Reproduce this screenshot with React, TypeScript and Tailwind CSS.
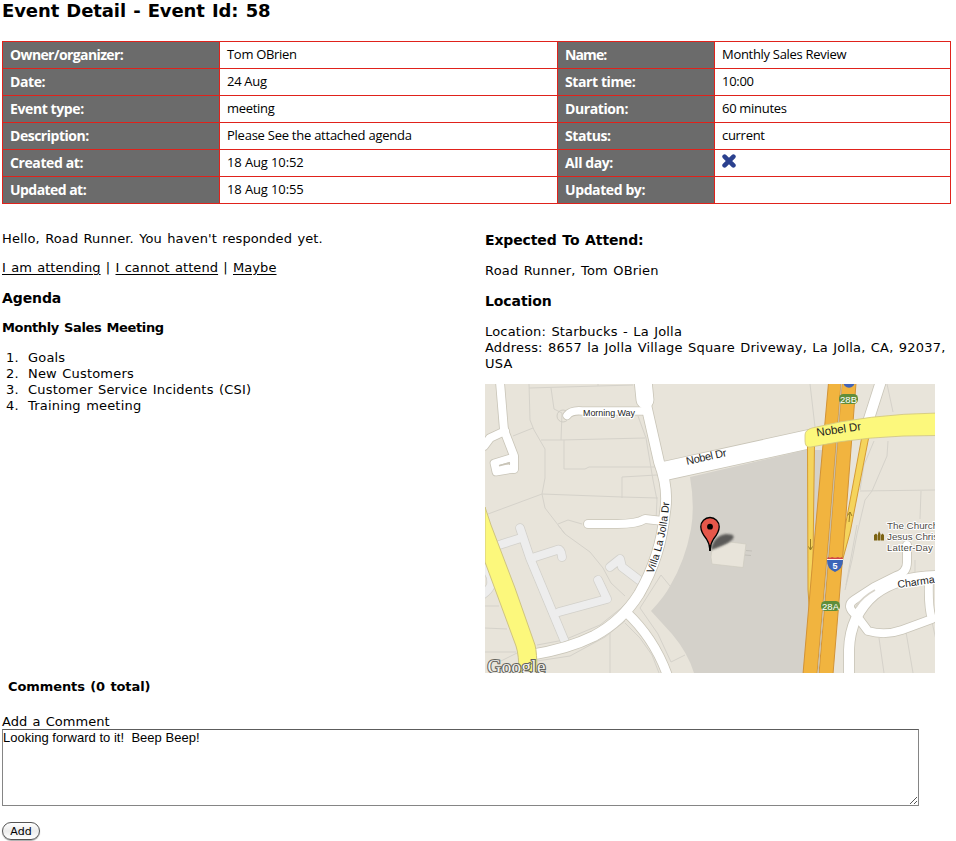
import type { ReactNode } from "react";

const LABEL = "flex h-[27px] items-center border-b border-r border-[#e0221b] bg-[#6b6b6b] pl-[7px] pb-px text-[14px] font-bold text-white tracking-[-0.4px] [word-spacing:0px] font-['Open_Sans','Noto_Sans',sans-serif] whitespace-nowrap";
const VALUE = "flex h-[27px] items-center border-b border-r border-[#e0221b] pl-[7px] pb-[2px] text-[13px] tracking-[-0.3px] [word-spacing:0px] font-['Open_Sans','Noto_Sans',sans-serif] whitespace-nowrap";

function T({ className, children }: { className: string; children: ReactNode }) {
  return <span className={className}>{children}</span>;
}

function Cross() {
  return (
    <svg className="mb-[3px] h-[14px] w-[14px]" viewBox="0 0 14 14">
      <path d="M2.6 2.6L11.4 11.4M11.4 2.6L2.6 11.4" stroke="#2b418f" strokeWidth="4.6" strokeLinecap="round" />
    </svg>
  );
}

function DetailTable() {
  return (
    <div className="ml-[2px] grid w-[949px] grid-cols-[217px_338px_157px_236px] border-l border-t border-[#e0221b]">
      <div className={LABEL}><T className="tracking-[-0.62px]">Owner/organizer:</T></div>
      <div className={VALUE}>Tom OBrien</div>
      <div className={LABEL}><T className="tracking-[-0.9px]">Name:</T></div>
      <div className={VALUE}>Monthly Sales Review</div>

      <div className={LABEL}>Date:</div>
      <div className={VALUE}>24 Aug</div>
      <div className={LABEL}>Start time:</div>
      <div className={VALUE}>10:00</div>

      <div className={LABEL}>Event type:</div>
      <div className={VALUE}>meeting</div>
      <div className={LABEL}>Duration:</div>
      <div className={VALUE}>60 minutes</div>

      <div className={LABEL}><T className="tracking-[-0.48px]">Description:</T></div>
      <div className={VALUE}><T className="tracking-[-0.25px]">Please See the attached agenda</T></div>
      <div className={LABEL}>Status:</div>
      <div className={VALUE}>current</div>

      <div className={LABEL}>Created at:</div>
      <div className={VALUE}><T className="tracking-[-0.12px]">18 Aug 10:52</T></div>
      <div className={LABEL}>All day:</div>
      <div className={VALUE}><Cross /></div>

      <div className={LABEL}><T className="tracking-[-0.55px]">Updated at:</T></div>
      <div className={VALUE}><T className="tracking-[-0.12px]">18 Aug 10:55</T></div>
      <div className={LABEL}>Updated by:</div>
      <div className={VALUE} />
    </div>
  );
}

const AGENDA = ["Goals", "New Customers", "Customer Service Incidents (CSI)", "Training meeting"];

const PARCELS = [
  "M529 384L530 420L534 430L545 449V478L542 494L545 508L565 534",
  "M529 388L633 385M598 384V386",
  "M551 388L554 409L562 413L561 440",
  "M513 436L533 428M541 440H561L645 438",
  "M564 440V469H585L589 467H655",
  "M622 498V477L657 475M542 494L622 497L658 498",
  "M488 514L542 494M558 524L568 520L582 524",
  "M558 525L565 534L590 552L603 568L611 583L625 596",
  "M485 606H499M485 628L507 629M485 652H516M501 661L517 653",
  "M537 645L564 640L600 625L620 609L641 588L652 560L662 530",
  "M537 661L570 656L605 637L625 621M610 631V673",
  "M625 623L640 638L652 655L659 673",
  "M670 586L661 575L640 608L658 634L671 662L685 655",
  "M638 416L646 438L653 480L657 500L656 520",
  "M810 384L815 427M888 441L887 456L872 491L865 500L857 534L852 560L845 590",
  "M874 441L864 465L860 490M860 491L935 490M921 491L920 519M857 525L846 585",
  "M879 638L884 673M906 632L913 673M932 622L936 640M887 384L893 412M915 560V572",
];

const GREY_STREETS = [
  "M520 528L530 558L565 642",
  "M499 545L521 538",
  "M532 558L557 550Q561 548 562 557",
  "M559 612L607 599L598 580",
  "M610 567L620 559L622 567L639 580",
  "M480 566Q493 571 491 585Q488 592 480 596",
];

const STREETS = [
  { d: "M500 382L504 430L514 456V469", w: 8 },
  { d: "M505 431L490 438L484 446", w: 8 },
  { d: "M514 457L494 463L496 472L514 469", w: 7 },
  { d: "M567 415.500Q571 410 582 411H645", w: 7.500 },
  { d: "M588 524H617Q637 524 645 519L663 521", w: 8 },
  { d: "M626 612Q656 640 669 680", w: 9 },
  { d: "M882 378L867 425", w: 10 },
  { d: "M907 545V562Q907 573 896 576L874 587L854 600Q845 606 856 615L868 631Q885 636 902 630L932 619Q928 608 929 580", w: 8 },
  { d: "M938 576Q899 576 875 594Q850 615 849 650V678", w: 10 },
  { d: "M643 380L645 400", w: 17 },
  { d: "M645 400L659 462Q669 489 665 512Q661 556 639 594Q622 621 594 636Q568 649 530 655", w: 10 },
];

function LocationMap() {
  return (
    <svg className="mt-[12px] block h-[289px] w-[450px] tracking-normal [word-spacing:0px]" viewBox="485 384 450 289" fontFamily="'Liberation Sans', Arial, sans-serif">
      <rect x="485" y="384" width="450" height="289" fill="#e8e4da" />
      <path d="M690 477L806 450H830L812 673H694Q688 653 672 634L651 611Q665 596 670 586Q685 561 691 529Q695 505 690 477Z" fill="#d4d1ca" />
      <g fill="none" stroke="#d5d2ca" strokeWidth="1">
        {PARCELS.map((d) => <path key={d} d={d} />)}
      </g>
      <circle cx="563" cy="416" r="6" fill="none" stroke="#d0cdc4" strokeWidth="1" />
      <path d="M712 564L743 567.500L746 544L730 542L712 549L711 557Z" fill="#e8e4da" stroke="#cfcbc0" strokeWidth="0.700" />
      <path d="M746 550.500L752 551M745 555L751 555.500M753 462V457L763 455V459" stroke="#bdbab2" strokeWidth="0.800" fill="none" />

      <g fill="none" strokeLinecap="round" strokeLinejoin="round">
        {GREY_STREETS.map((d) => <path key={d} d={d} stroke="#d2d0ca" strokeWidth="9.500" />)}
        {GREY_STREETS.map((d) => <path key={d} d={d} stroke="#ededed" strokeWidth="8" />)}
        {STREETS.map((s) => <path key={s.d} d={s.d} stroke="#c9c5b8" strokeWidth={s.w + 1.6} />)}
        <path d="M667 470.500L812 438.500" stroke="#c9c5b8" strokeWidth="20" strokeLinecap="butt" />
        {STREETS.map((s) => <path key={s.d} d={s.d} stroke="#fff" strokeWidth={s.w} />)}
        <path d="M662 471.500L812 438.500" stroke="#fff" strokeWidth="18.400" strokeLinecap="butt" />
        <path d="M496 467.500H512" stroke="#fff" strokeWidth="5" />
      </g>
      <path d="M499 465.800L510 462.800" stroke="#c9c5b8" strokeWidth="1.600" />
      <path d="M875 590Q862 597 856 607" stroke="#d8d4ca" strokeWidth="1.800" fill="none" />

      <path d="M485 507L491 525L515 588L535 645Q537 652 537 673H519Q519 655 516 646L485 562Z" fill="#fcf87c" stroke="#cfc480" strokeWidth="1" />

      <path d="M825 440L803 673H812L845 450Z" fill="#cbc8c1" />
      <path d="M807.500 444H814.500L813 560L810 618L808 590Z" fill="#f5d45c" stroke="#d49b35" strokeWidth="1" />
      <path d="M862 436H869L850 533L842 562L838 590L844 533Z" fill="#f5d45c" stroke="#d49b35" strokeWidth="1" />
      <path d="M828.500 383H841L829 534L817 674H803L815 534Z" fill="#f1b43f" stroke="#d29336" strokeWidth="1" />
      <path d="M842 383H856L844.500 534L833 674H819L830.500 534Z" fill="#f1b43f" stroke="#d29336" strokeWidth="1" />
      <path d="M841.500 384L829.800 534L818 673" stroke="#c8bea8" strokeWidth="1.100" fill="none" />

      <path d="M812 428Q868 414 938 413V435.500Q866 435 811 447Q805 448 805 441V435Q805 430 812 428Z" fill="#fcf87c" stroke="#cfc480" strokeWidth="0.800" />

      <g stroke="#9a7d25" strokeWidth="1" fill="none">
        <path d="M810.500 539V550M808.500 546.500L810.500 550L812.500 546.500" />
        <path d="M849 522L850 512M847.500 515.500L850 512L852 516" />
      </g>

      <circle cx="849" cy="382" r="5.800" fill="#4264b8" />
      <rect x="839" y="394" width="19" height="10" rx="4.500" fill="#5f8d3a" />
      <text x="848.500" y="402.500" fontSize="9.500" fill="#fff" textAnchor="middle" textLength="17">28B</text>
      <rect x="821" y="601" width="19" height="10" rx="4.500" fill="#5f8d3a" />
      <text x="830.500" y="609.500" fontSize="9.500" fill="#fff" textAnchor="middle" textLength="17">28A</text>
      <path d="M827 560H843Q843 569 835 572Q827 569 827 560Z" fill="#3c65b8" />
      <path d="M828 557Q830 558.500 832 557Q835 558.500 838 557Q840 558.500 842 557L843 559H827Z" fill="#d0454a" />
      <path d="M827 559.500H843" stroke="#fff" strokeWidth="0.900" />
      <text x="835" y="568.500" fontSize="9" fontWeight="bold" fill="#fff" textAnchor="middle">5</text>

      <g fill="#1c1c1c" stroke="#fff" strokeWidth="2.500" paintOrder="stroke" strokeLinejoin="round">
        <text x="583" y="415.500" fontSize="9.500" textLength="52" lengthAdjust="spacingAndGlyphs">Morning Way</text>
        <text transform="translate(687 465) rotate(-12.500)" fontSize="11" textLength="41" stroke="none">Nobel Dr</text>
        <text transform="translate(817 436.500) rotate(-8.500)" fontSize="11.500" textLength="45" stroke="none">Nobel Dr</text>
        <path id="villa-label" d="M653 574Q667 540 669.500 498" fill="none" stroke="none" />
        <text fontSize="10.500" stroke="none"><textPath href="#villa-label" textLength="74">Villa La Jolla Dr</textPath></text>
        <text transform="translate(898 588) rotate(-8)" fontSize="10.500">Charma</text>
        <g fill="#4f4d47" fontSize="9.800" strokeWidth="2">
          <text x="887" y="528.500">The Church</text>
          <text x="887" y="540">Jesus Chris</text>
          <text x="887" y="551" textLength="46">Latter-Day</text>
        </g>
      </g>
      <path d="M874 540.500V535L876 533.500L877.500 535V540.500ZM878 540.500V534L879 531L880.500 534V540.500ZM881 540.500V535L882.500 533.500L884 535V540.500Z" fill="#7c6312" />

      <defs>
        <filter id="pin-shadow" x="-50%" y="-50%" width="200%" height="200%"><feGaussianBlur stdDeviation="1.300" /></filter>
      </defs>
      <path d="M711 550Q713 536 726 534Q737 534 732 540Q726 545 711 550Z" fill="#333" opacity="0.750" filter="url(#pin-shadow)" />
      <path d="M710 550.500Q709.800 544 706.500 539Q700.800 532 700.800 526.700A9.200 9.200 0 0 1 719.200 526.700Q719.200 532 713.500 539Q710.200 544 710 550.500Z" fill="#e6574a" stroke="#000" strokeWidth="1.300" />
      <path d="M710 551V545" stroke="#000" strokeWidth="1.800" />
      <circle cx="710" cy="526.700" r="2.900" />

      <text x="487.500" y="673" fontFamily="'Liberation Serif', serif" fontSize="19" textLength="58" fill="#f3f3f0" stroke="#66645e" strokeWidth="2.200" paintOrder="stroke">Google</text>
    </svg>
  );
}

export default function App() {
  return (
    <div className="h-[841px] w-[956px] overflow-hidden bg-white text-[13px] leading-4 tracking-[0.19px] text-black [word-spacing:1px] font-['DejaVu_Sans',Verdana,sans-serif]">
      <h1 className="h-[41px] pl-[2px] text-[18px] font-bold leading-[22px] tracking-[-0.1px]">Event Detail - Event Id: 58</h1>
      <DetailTable />

      <div className="grid h-[469px] grid-cols-[483px_1fr] pl-[2px] pt-[27px]">
        <section>
          <p className="tracking-[0.13px]">Hello, Road Runner. You haven't responded yet.</p>
          <p className="mt-[13px] tracking-[0.08px]">
            <a className="underline underline-offset-2">I am attending</a> | <a className="underline underline-offset-2">I cannot attend</a> | <a className="underline underline-offset-2">Maybe</a>
          </p>
          <h2 className="mt-[14px] text-[14px] font-bold tracking-[-0.1px]">Agenda</h2>
          <h3 className="mt-[14px] text-[13px] font-bold tracking-[-0.37px]">Monthly Sales Meeting</h3>
          <ol className="mt-[14px]">
            {AGENDA.map((item, i) => (
              <li key={item} className="flex"><span className="w-[26px] pl-[4px]">{i + 1}.</span>{item}</li>
            ))}
          </ol>
        </section>
        <section>
          <h2 className="mt-[1px] text-[14px] font-bold tracking-[-0.13px]">Expected To Attend:</h2>
          <p className="mt-[15px]">Road Runner, Tom OBrien</p>
          <h2 className="mt-[14px] text-[14px] font-bold tracking-[-0.1px]">Location</h2>
          <p className="mt-[15px]">Location: Starbucks - La Jolla</p>
          <p className="whitespace-nowrap">Address: 8657 la Jolla Village Square Driveway, La Jolla, CA, 92037,<br />USA</p>
          <LocationMap />
        </section>
      </div>

      <h3 className="mt-[6px] pl-[8px] text-[13px] font-bold tracking-[-0.1px]">Comments (0 total)</h3>
      <form className="mt-[19px] pl-[2px]">
        <label className="block h-[15px] tracking-[0.05px]">Add a Comment</label>
        <div className="relative h-[77px] w-[917px]">
          <textarea
            className="block h-full w-full resize-none border border-[#858585] border-t-[#5c5c5c] bg-white pt-0 text-[13px] leading-[15px] tracking-[0.02px] [word-spacing:0px] font-['Liberation_Sans',Arial,sans-serif]"
            defaultValue="Looking forward to it!  Beep Beep!"
          />
          <svg className="absolute bottom-[2px] right-[2px] h-[7px] w-[7px]" viewBox="0 0 7 7">
            <path d="M0 7L7 0M4 7L7 4" stroke="#444" strokeWidth="0.900" />
          </svg>
        </div>
        <button type="button" className="mt-[16px] flex h-[18px] w-[38px] items-center justify-center rounded-full border border-[#555] bg-linear-to-b from-white via-[#ececec] to-white pt-px text-[11px] tracking-normal shadow-[0_1px_1px_#aaa]">Add</button>
      </form>
    </div>
  );
}
